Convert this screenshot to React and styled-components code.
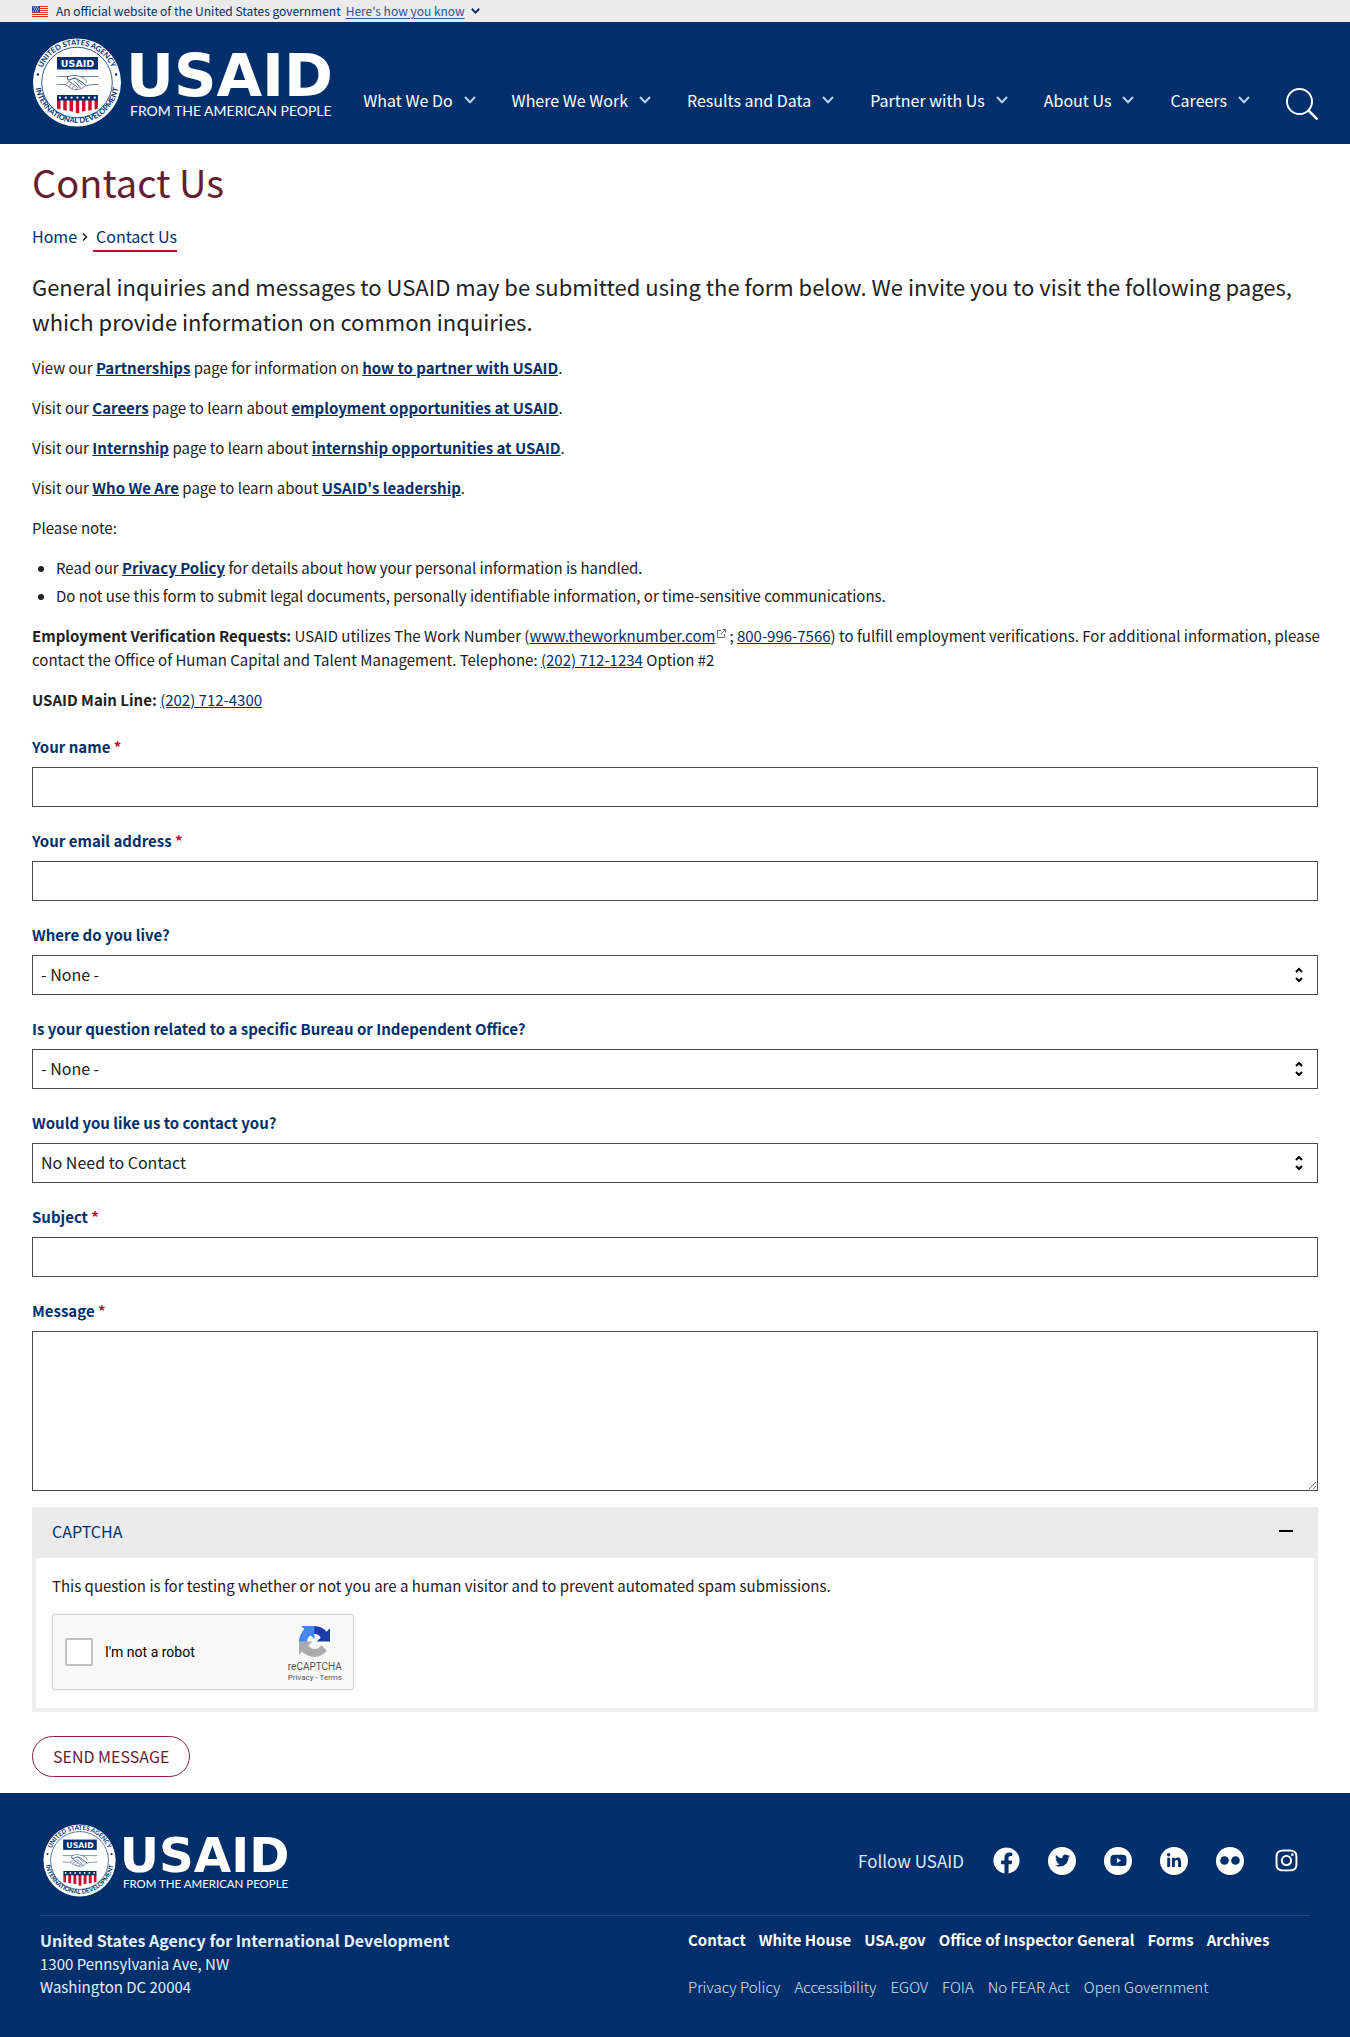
import React from 'react';
import styled, { createGlobalStyle } from 'styled-components';
import { FaFacebook, FaTwitter, FaYoutube, FaLinkedinIn, FaInstagram } from 'react-icons/fa';

const navy = '#002f6c';
const maroon = '#651d32';
const red = '#ba0c2f';
const ink = '#212121';
const sans = '"Noto Sans CJK SC", "Open Sans", sans-serif';

const GlobalStyle = createGlobalStyle`
  *, *::before, *::after { box-sizing: border-box; }
  body {
    margin: 0;
    background: #fff;
    color: ${ink};
    font: 400 15px/24px ${sans};
  }
  button, input, select, textarea { font-family: inherit; }
  a { color: ${navy}; }
`;

/* Government banner */
const Banner = styled.div`
  display: flex;
  align-items: center;
  gap: 5px;
  height: 22px;
  padding: 0 32px;
  background: #ebebeb;
  color: ${navy};
  font-size: 12px;
  line-height: 20px;
`;

const BannerText = styled.span`
  display: flex;
  align-items: center;
  gap: 8px;
`;

const BannerToggle = styled.button`
  display: flex;
  align-items: center;
  gap: 6px;
  padding: 0;
  border: 0;
  background: none;
  color: #2c5592;
  font-size: 12px;
  line-height: 20px;
  span { text-decoration: underline; text-underline-offset: 2px; }
`;

/* Header */
const Header = styled.header`
  display: flex;
  justify-content: space-between;
  align-items: center;
  min-height: 122px;
  padding: 16px 32px 17px;
  background: ${navy};
`;

const HomeLink = styled.a`
  display: block;
  flex: none;
  line-height: 0;
  margin-left: ${(p) => p.$inset || 0}px;
`;

const Nav = styled.nav`
  display: flex;
  align-items: flex-end;
  align-self: flex-end;
  gap: 36px;
  padding-bottom: 7px;
`;

const NavItem = styled.button`
  display: flex;
  align-items: center;
  gap: 11px;
  padding: 0;
  border: 0;
  background: none;
  color: #fff;
  font-size: 16px;
  line-height: 40px;
  white-space: nowrap;
`;

const SearchButton = styled.button`
  width: 32px;
  height: 32px;
  padding: 0;
  border: 0;
  background: none;
  line-height: 0;
`;

/* Content */
const Main = styled.main`
  padding: 15px 32px 16px;
`;

const Title = styled.h1`
  margin: 0 0 19px;
  color: ${maroon};
  font-weight: 400;
  font-size: 38px;
  line-height: 46px;
`;

const Breadcrumb = styled.nav`
  display: flex;
  align-items: flex-start;
  gap: 5px;
  margin-bottom: 17px;
  font-size: 16px;
  line-height: 24px;
  a { text-decoration: none; }
`;

const Crumb = styled.a`
  padding: 0 0 2px 3px;
  border-bottom: 2px solid ${red};
`;

const CrumbArrow = styled.svg`
  margin-top: 9px;
`;

const Intro = styled.p`
  margin: 0 0 17px;
  font-size: 22px;
  line-height: 35px;
`;

const Para = styled.p`
  margin: 0 -8px 16px 0;
`;

const BoldLink = styled.a`
  font-weight: 700;
`;

const Notes = styled.ul`
  display: grid;
  gap: 4px;
  margin: 0 0 16px;
  padding-left: 24px;
`;

const ExternalIcon = styled.svg`
  margin: 0 3px 4px 2px;
`;

/* Form */
const Form = styled.form`
  display: grid;
  justify-items: start;
  margin-top: 23px;
`;

const Field = styled.div`
  width: 100%;
  margin-bottom: ${(p) => (p.$last ? 16 : 22)}px;
`;

const Label = styled.label`
  display: block;
  margin-bottom: 8px;
  color: ${navy};
  font-weight: 700;
  font-size: 15px;
  line-height: 24px;
`;

const Required = styled.span`
  color: ${red};
`;

const boxed = `
  display: block;
  width: 100%;
  height: 40px;
  padding: 0 8px 2px;
  border: 1px solid #4a4a4f;
  border-radius: 0;
  background: #fff;
  color: ${ink};
  font-size: 16px;
`;

const TextInput = styled.input`${boxed}`;

const TextArea = styled.textarea`
  ${boxed}
  height: 160px;
  padding: 8px;
`;

const SelectBox = styled.div`
  position: relative;
  svg {
    position: absolute;
    top: 12px;
    right: 15px;
    pointer-events: none;
  }
`;

const Select = styled.select`
  ${boxed}
  appearance: none;
`;

const Captcha = styled.details`
  width: 100%;
  margin-bottom: 24px;
  border: 4px solid #eeeeee;
  border-top: 0;
`;

const CaptchaHead = styled.summary`
  display: flex;
  justify-content: space-between;
  align-items: center;
  margin: 0 -4px;
  padding: 0 25px 3px 20px;
  background: #ebebeb;
  color: ${navy};
  font-size: 16px;
  line-height: 48px;
  list-style: none;
`;

const CaptchaBody = styled.div`
  display: grid;
  gap: 16px;
  padding: 16px 16px 18px;
  p { margin: 0; }
`;

const Robot = styled.div`
  display: flex;
  align-items: center;
  width: 302px;
  height: 76px;
  padding: 0 8px 0 12px;
  border: 1px solid #d3d3d3;
  border-radius: 3px;
  background: #f9f9f9;
  box-shadow: 0 0 3px rgba(0, 0, 0, 0.1);
  color: #000;
  font: 14px/18px Roboto, sans-serif;
`;

const RobotCheck = styled.input`
  appearance: none;
  width: 28px;
  height: 28px;
  margin: 0 12px 0 0;
  border: 2px solid #c1c1c1;
  border-radius: 2px;
  background: #fff;
`;

const RobotBrand = styled.div`
  display: grid;
  justify-items: center;
  margin-left: auto;
  padding: 5px 3px 0;
  color: #555;
  font-size: 10px;
  line-height: 12px;
  svg { margin-bottom: 4px; }
  small { font-size: 8px; line-height: 10px; }
  a { color: inherit; text-decoration: none; }
`;

const SubmitButton = styled.button`
  height: 41px;
  padding: 0 20px 2px;
  border: 1px solid #93203f;
  border-radius: 21px;
  background: #fff;
  color: ${maroon};
  font-size: 16px;
  text-transform: uppercase;
`;

/* Footer */
const Footer = styled.footer`
  margin-bottom: 1px;
  padding: 31px 40px 41px;
  background: ${navy};
  color: #fff;
  font-size: 16px;
  line-height: 22px;
`;

const FooterTop = styled.div`
  display: flex;
  justify-content: space-between;
  align-items: center;
  padding-bottom: 18px;
  border-bottom: 1px solid #24487c;
`;

const Social = styled.div`
  display: flex;
  align-items: center;
  gap: 28px;
  padding-right: 10px;
  color: #dce9f7;
  font-size: 17px;
`;

const SocialLink = styled.a`
  display: grid;
  place-items: center;
  width: 28px;
  height: 28px;
  border-radius: 50%;
  background: ${(p) => (p.$plain ? 'none' : '#fff')};
  color: ${(p) => (p.$plain ? '#fff' : navy)};
`;

const FooterGrid = styled.div`
  display: grid;
  grid-template-columns: 1fr 1fr;
  gap: 26px;
  padding-top: 13px;
`;

const Address = styled.address`
  color: #e4f0fb;
  font-style: normal;
  font-size: 15px;
  line-height: 23px;
  strong { font-size: 16px; }
`;

const LinkColumn = styled.div`
  display: grid;
  align-content: start;
  gap: 25px;
`;

const LinkRow = styled.div`
  display: flex;
  flex-wrap: wrap;
  gap: 0 ${(p) => (p.$light ? 14 : 13)}px;
  font-size: 15px;
  font-weight: ${(p) => (p.$light ? 300 : 700)};
  a {
    color: ${(p) => (p.$light ? '#d3e4f5' : '#fff')};
    text-decoration: none;
  }
`;

function Chevron({ width = 12, color = '#b9d2ee', stroke = 2 }) {
  return (
    <svg width={width} height={width * 8 / 12} viewBox="0 0 12 8" fill="none" stroke={color} strokeWidth={stroke} aria-hidden="true">
      <path d="M1 1l5 5.2L11 1" />
    </svg>
  );
}

function Flag() {
  return (
    <svg width="16" height="11" viewBox="0 0 16 11" aria-hidden="true">
      <rect width="16" height="11" fill="#fff" />
      {[0, 2, 4, 6, 8, 10].map((y) => (
        <rect key={y} y={y} width="16" height="1" fill="#d8352e" />
      ))}
      <rect width="8" height="6" fill="#2a3fb0" />
      {[1, 3, 5].map((y) => [1, 3, 5].map((x) => (
        <rect key={`${x}-${y}`} x={x + (y === 3 ? 1 : 0)} y={y - 0.5} width="1" height="1" fill="#fff" />
      )))}
    </svg>
  );
}

function Logo({ id, width }) {
  return (
    <svg width={width} height={Math.round(width * 89 / 300)} viewBox="0 0 300 89" overflow="visible" role="img" aria-label="USAID home">
      <defs>
        <path id={`${id}-top`} d="M6.500 44.500a37.500 37.500 0 0 1 75 0" />
        <path id={`${id}-low`} d="M2 43a42 42 0 0 0 84 0" />
      </defs>
      <circle cx="44" cy="44.500" r="44" fill="#fff" />
      <circle cx="44" cy="44.500" r="35.300" fill="none" stroke={navy} strokeWidth="0.800" />
      <g fill={navy} fontFamily="Lato, sans-serif" fontWeight="700" textAnchor="middle">
        <text fontSize="7.500">
          <textPath href={`#${id}-top`} startOffset="50%">UNITED STATES AGENCY</textPath>
        </text>
        <text fontSize="7.500">
          <textPath href={`#${id}-low`} startOffset="50%">INTERNATIONAL DEVELOPMENT</textPath>
        </text>
      </g>
      <circle cx="4.900" cy="36.500" r="1.200" fill={navy} />
      <circle cx="83.100" cy="36.500" r="1.200" fill={navy} />
      <rect x="24" y="19" width="41" height="12.500" fill={navy} />
      <text x="44.500" y="28.800" fill="#fff" fontFamily="DejaVu Sans, sans-serif" fontWeight="700" fontSize="9.500" textAnchor="middle">USAID</text>
      <g fill="none" stroke="#5d7397" strokeWidth="0.900" strokeLinejoin="round" strokeLinecap="round">
        <path d="M24 38.500h11c4-1.400 8-1.500 12 0h18" />
        <path d="M24 46.500h8c3 1.200 6 4.600 9 4.800 3 .6 7 .2 9-1.600 2-1.600 3-3.200 15-3.200" />
        <path d="M35 38.500c-1 1.500-1 2.500 0 3.500 3 .500 4-2 7-1.800 4 1.500 7 4 11 7.200" stroke={navy} />
        <path d="M47 38.500c3 .5 6 3 6.500 5.500M33 46.500l3-3 3 1.500M36 48.500l3-3 2.500 1.500M39 50.200l3-2.800 2 1.300M43 51.200l2.500-2.400 2 1M41 43.500l6 5M44 42.500l5.500 4.500" />
      </g>
      <clipPath id={`${id}-shield`}>
        <path d="M24 57h41v13.500c-6 2.500-14 1.500-20.500 5C38 72 30 73 24 70.500z" />
      </clipPath>
      <g clipPath={`url(#${id}-shield)`}>
        {[0, 1, 2, 3, 4, 5, 6].map((i) => (
          <rect key={i} x={24 + i * 6.25} y="62" width="3.500" height="15" fill="#c8102e" />
        ))}
        <rect x="24" y="57" width="41" height="5.500" fill={navy} />
        {[0, 1, 2, 3, 4, 5, 6].map((i) => (
          <circle key={i} cx={27 + i * 5.8} cy="59.700" r="1.100" fill="#fff" />
        ))}
      </g>
      <g fill="#fff">
        <text x="93" y="58" fontFamily="DejaVu Sans, sans-serif" fontSize="59" fontWeight="700">USAID</text>
        <text x="97" y="77.500" fontFamily="Lato, sans-serif" fontSize="14">FROM THE AMERICAN PEOPLE</text>
      </g>
    </svg>
  );
}

function SelectField({ id, label, value }) {
  return (
    <Field>
      <Label htmlFor={id}>{label}</Label>
      <SelectBox>
        <Select id={id} defaultValue={value}>
          <option>{value}</option>
        </Select>
        <svg width="8" height="16" viewBox="0 0 8 16" fill="none" stroke="#000" strokeWidth="2" aria-hidden="true">
          <path d="M1 5l3-3 3 3M1 11l3 3 3-3" />
        </svg>
      </SelectBox>
    </Field>
  );
}

function InputField({ id, label, type = 'text' }) {
  return (
    <Field>
      <Label htmlFor={id}>{label} <Required>*</Required></Label>
      <TextInput id={id} type={type} />
    </Field>
  );
}

const menu = ['What We Do', 'Where We Work', 'Results and Data', 'Partner with Us', 'About Us', 'Careers'];
const primaryLinks = ['Contact', 'White House', 'USA.gov', 'Office of Inspector General', 'Forms', 'Archives'];
const legalLinks = ['Privacy Policy', 'Accessibility', 'EGOV', 'FOIA', 'No FEAR Act', 'Open Government'];

const pointers = [
  ['View our', 'Partnerships', 'page for information on', 'how to partner with USAID'],
  ['Visit our', 'Careers', 'page to learn about', 'employment opportunities at USAID'],
  ['Visit our', 'Internship', 'page to learn about', 'internship opportunities at USAID'],
  ['Visit our', 'Who We Are', 'page to learn about', "USAID's leadership"],
];

export default function App() {
  return (
    <>
      <GlobalStyle />
      <Banner>
        <BannerText><Flag />An official website of the United States government</BannerText>
        <BannerToggle type="button">
          <span>Here's how you know</span>
          <Chevron width={9} color={navy} stroke={2.5} />
        </BannerToggle>
      </Banner>
      <Header>
        <HomeLink href="#" $inset={1}><Logo id="header" width={300} /></HomeLink>
        <Nav aria-label="Main">
          {menu.map((name) => (
            <NavItem type="button" key={name}>{name}<Chevron /></NavItem>
          ))}
          <SearchButton type="button" aria-label="Search">
            <svg width="32" height="32" viewBox="0 0 32 32" fill="none" stroke="#fff" strokeWidth="2">
              <circle cx="13.500" cy="13.500" r="12.500" />
              <path d="M22.500 22.500l9 9" strokeWidth="2.500" />
            </svg>
          </SearchButton>
        </Nav>
      </Header>
      <Main>
        <Title>Contact Us</Title>
        <Breadcrumb aria-label="Breadcrumb">
          <a href="#">Home</a>
          <CrumbArrow width="6" height="8" viewBox="0 0 6 8" fill="none" stroke={ink} strokeWidth="1.500" aria-hidden="true">
            <path d="M1 .5l3.500 3.500L1 7.500" />
          </CrumbArrow>
          <Crumb href="#">Contact Us</Crumb>
        </Breadcrumb>
        <Intro>
          General inquiries and messages to USAID may be submitted using the form below. We invite you to visit the
          following pages, which provide information on common inquiries.
        </Intro>
        {pointers.map(([lead, page, middle, target]) => (
          <Para key={page}>
            {lead} <BoldLink href="#">{page}</BoldLink> {middle} <BoldLink href="#">{target}</BoldLink>.
          </Para>
        ))}
        <Para>Please note:</Para>
        <Notes>
          <li>Read our <BoldLink href="#">Privacy Policy</BoldLink> for details about how your personal information is handled.</li>
          <li>Do not use this form to submit legal documents, personally identifiable information, or time-sensitive communications.</li>
        </Notes>
        <Para>
          <strong>Employment Verification Requests:</strong> USAID utilizes The Work Number (<a href="#">www.theworknumber.com</a>
          <ExternalIcon width="9" height="9" viewBox="0 0 9 9" fill="none" stroke="#727272" aria-label="External link">
            <path d="M4 1.500H.5v7h7V5M5.500.5h3v3M8.500.5L4 5" />
          </ExternalIcon>
          ; <a href="#">800-996-7566</a>) to fulfill employment verifications. For additional information, please
          contact the Office of Human Capital and Talent Management. Telephone: <a href="#">(202) 712-1234</a> Option #2
        </Para>
        <Para><strong>USAID Main Line:</strong> <a href="#">(202) 712-4300</a></Para>
        <Form>
          <InputField id="name" label="Your name" />
          <InputField id="email" label="Your email address" type="email" />
          <SelectField id="country" label="Where do you live?" value="- None -" />
          <SelectField id="bureau" label="Is your question related to a specific Bureau or Independent Office?" value="- None -" />
          <SelectField id="reply" label="Would you like us to contact you?" value="No Need to Contact" />
          <InputField id="subject" label="Subject" />
          <Field $last>
            <Label htmlFor="message">Message <Required>*</Required></Label>
            <TextArea id="message" />
          </Field>
          <Captcha open>
            <CaptchaHead>
              CAPTCHA
              <svg width="14" height="2" aria-hidden="true"><rect width="14" height="2" /></svg>
            </CaptchaHead>
            <CaptchaBody>
              <p>This question is for testing whether or not you are a human visitor and to prevent automated spam submissions.</p>
              <Robot>
                <RobotCheck type="checkbox" id="robot" />
                <label htmlFor="robot">I'm not a robot</label>
                <RobotBrand>
                  <svg width="31" height="31" viewBox="0 0 64 64" aria-hidden="true">
                    <path fill="#1c3aa9" d="M64 31.955l-.018-1.370V4.687l-7.160 7.160C50.962 4.674 42.033.093 32.034.093c-10.405 0-19.650 4.960-25.488 12.640l11.736 11.860a15.550 15.550 0 0 1 4.754-5.334c2.050-1.600 4.952-2.906 8.968-2.906.485 0 .860.057 1.135.163 4.976.393 9.288 3.140 11.828 7.124l-8.307 8.307L64 31.953" />
                    <path fill="#4285f4" d="M31.862.094l-1.370.018H4.594l7.160 7.160C4.580 13.137 0 22.063 0 32.062c0 10.405 4.960 19.650 12.640 25.488l11.860-11.736a15.550 15.550 0 0 1-5.334-4.754c-1.600-2.050-2.906-4.952-2.906-8.968 0-.485.057-.860.163-1.135.393-4.976 3.140-9.288 7.124-11.828l8.307 8.307L31.860.095" />
                    <path fill="#ababab" d="M.001 32.045l.018 1.370v25.898l7.160-7.160c5.860 7.173 14.790 11.754 24.788 11.754 10.405 0 19.650-4.960 25.488-12.640l-11.736-11.860a15.550 15.550 0 0 1-4.754 5.334c-2.050 1.600-4.952 2.906-8.968 2.906-.485 0-.860-.057-1.135-.163-4.976-.393-9.288-3.140-11.828-7.124l8.307-8.307c-10.522.040-22.400.066-27.295-.005" />
                  </svg>
                  <span>reCAPTCHA</span>
                  <small><a href="#">Privacy</a> - <a href="#">Terms</a></small>
                </RobotBrand>
              </Robot>
            </CaptchaBody>
          </Captcha>
          <SubmitButton type="submit">Send message</SubmitButton>
        </Form>
      </Main>
      <Footer>
        <FooterTop>
          <HomeLink href="#" $inset={3}><Logo id="footer" width={247} /></HomeLink>
          <Social>
            Follow USAID
            <SocialLink href="#" $plain aria-label="Facebook"><FaFacebook size={27} /></SocialLink>
            <SocialLink href="#" aria-label="Twitter"><FaTwitter size={15} /></SocialLink>
            <SocialLink href="#" aria-label="YouTube"><FaYoutube size={17} /></SocialLink>
            <SocialLink href="#" aria-label="LinkedIn"><FaLinkedinIn size={16} /></SocialLink>
            <SocialLink href="#" aria-label="Flickr">
              <svg width="20" height="9" viewBox="0 0 20 9" fill="currentColor">
                <circle cx="4.500" cy="4.500" r="4.300" />
                <circle cx="15.500" cy="4.500" r="4.300" />
              </svg>
            </SocialLink>
            <SocialLink href="#" $plain aria-label="Instagram"><FaInstagram size={25} /></SocialLink>
          </Social>
        </FooterTop>
        <FooterGrid>
          <Address>
            <strong>United States Agency for International Development</strong><br />
            1300 Pennsylvania Ave, NW<br />
            Washington DC 20004
          </Address>
          <LinkColumn>
            <LinkRow>{primaryLinks.map((name) => <a href="#" key={name}>{name}</a>)}</LinkRow>
            <LinkRow $light>{legalLinks.map((name) => <a href="#" key={name}>{name}</a>)}</LinkRow>
          </LinkColumn>
        </FooterGrid>
      </Footer>
    </>
  );
}
